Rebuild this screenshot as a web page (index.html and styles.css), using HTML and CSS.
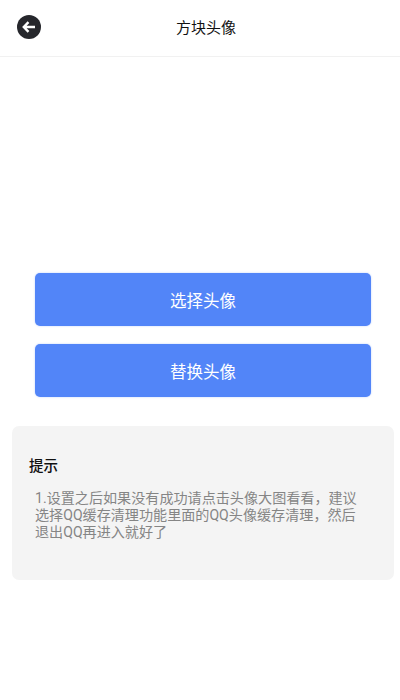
FILE: index.html
```html
<!DOCTYPE html>
<html lang="zh-CN">
<head>
<meta charset="utf-8">
<title>方块头像</title>
<link rel="stylesheet" href="styles.css">
</head>
<body>
<header class="bar">
  <span class="back">
    <svg viewBox="0 0 24 24" width="24" height="24">
      <circle cx="12" cy="12" r="12" fill="#26272c"/>
      <path d="M18 12H7M11.5 7.2L6.8 12l4.7 4.8" fill="none" stroke="#fff" stroke-width="2.4"/>
    </svg>
  </span>
  <h1 class="title">方块头像</h1>
</header>
<main class="main">
  <div class="actions">
    <button class="btn">选择头像</button>
    <button class="btn">替换头像</button>
  </div>
  <section class="tip">
    <h2 class="tip-title">提示</h2>
    <p class="tip-text">1.设置之后如果没有成功请点击头像大图看看，建议选择QQ缓存清理功能里面的QQ头像缓存清理，然后退出QQ再进入就好了</p>
  </section>
</main>
</body>
</html>
```
FILE: styles.css
```css
* { box-sizing: border-box; }
html, body { margin: 0; padding: 0; }
body {
  width: 400px;
  height: 700px;
  overflow: hidden;
  background: #fff;
  font-family: "Roboto", "Noto Sans CJK SC", sans-serif;
}
.bar {
  height: 57px;
  border-bottom: 1px solid #f1f1f1;
  display: flex;
  align-items: center;
  justify-content: center;
  padding-left: 12px;
  position: relative;
}
.back {
  position: absolute;
  left: 17px;
  top: 15px;
  width: 24px;
  height: 24px;
}
.back svg { display: block; }
.title {
  margin: 0 0 4px;
  font-size: 15px;
  font-weight: 400;
  color: #111;
}
.main {
  padding: 216px 6px 0 12px;
}
.actions {
  padding: 0 23px;
  display: flex;
  flex-direction: column;
  gap: 18px;
}
.btn {
  height: 53px;
  border: 0;
  border-radius: 5px;
  background: #5285f8;
  box-shadow: 0 0 2px rgba(82, 133, 248, 0.4);
  color: #fff;
  font: inherit;
  font-size: 16.5px;
  font-weight: 400;
  padding: 0;
}
.tip {
  margin-top: 29px;
  height: 154px;
  border-radius: 7px;
  background: #f4f4f4;
  padding: 30px 18px 0 17px;
}
.tip-title {
  margin: 0;
  font-size: 14.5px;
  line-height: 22px;
  font-weight: 500;
  color: #111;
}
.tip-text {
  margin: 12px 0 0;
  padding-left: 6px;
  width: 336px;
  font-size: 14.1px;
  line-height: 17px;
  color: #858585;
}
```
